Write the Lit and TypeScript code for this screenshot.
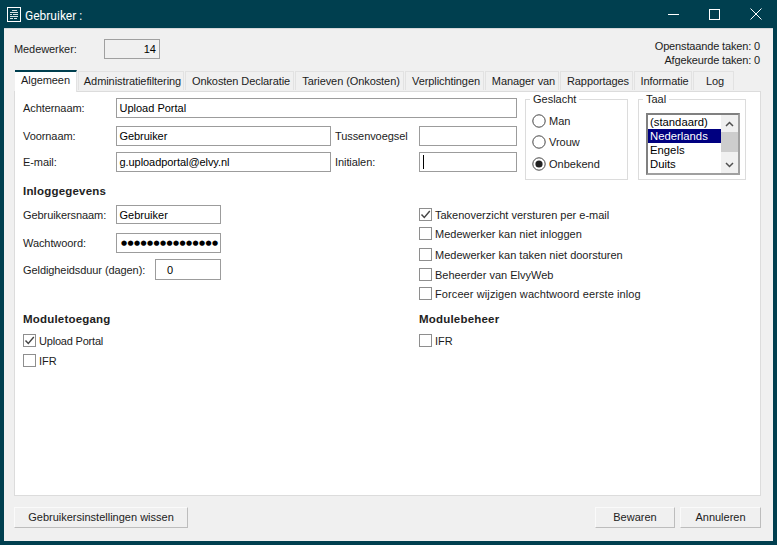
import { LitElement, html, css, nothing } from "lit";
import { customElement } from "lit/decorators.js";

const tabs: [string, number][] = [
  ["Algemeen", 62], ["Administratiefiltering", 106], ["Onkosten Declaratie", 109], ["Tarieven (Onkosten)", 109],
  ["Verplichtingen", 79], ["Manager van", 74], ["Rapportages", 73], ["Informatie", 58], ["Log", 41],
];
const check = html`<svg viewBox="0 0 13 13" width="13" height="13"><path d="M2.5 6.5 L5.3 9.5 L10.8 3" fill="none" stroke="#444" stroke-width="1.4"/></svg>`;

@customElement("app-root")
export class AppRoot extends LitElement {
  static styles = css`
    :host { display: block; width: 777px; height: 545px; background: #003f4f; font: 11px "Liberation Sans", Arial, sans-serif; color: #1c1c1c; overflow: hidden; }
    * { box-sizing: border-box; }
    .caption { height: 28px; display: flex; align-items: center; color: #fff; padding-left: 7px; }
    .caption .title { font: 12px Roboto, sans-serif; margin: 3px 0 0 4px; flex: 1; }
    .caption svg { display: block; }
    .wbtn { width: 41px; height: 28px; display: flex; align-items: center; justify-content: center; }
    .wbtn.close { width: 42px; }
    .wbtns { display: flex; }
    .client { margin-left: 4px; width: 769px; height: 513px; background: #f0f0f0; border-top: 1px solid #d4d8da; padding: 0 12px 0 10px; display: flex; flex-direction: column; }
    .head { height: 41px; display: flex; justify-content: space-between; padding-top: 10px; }
    .med { display: flex; align-items: center; height: 20px; }
    .med .lab { width: 90px; }
    .med .val { width: 56px; height: 20px; border: 1px solid #a0a0a0; text-align: right; padding-right: 3px; line-height: 18px; color: #000; }
    .counts { text-align: right; line-height: 14px; margin-right: 1px; letter-spacing: -0.15px; }
    .tabs { display: flex; gap: 1px; height: 22px; padding-left: 1px; align-items: flex-end; position: relative; z-index: 1; margin-top: -1px; }
    .tab { height: 19px; background: #f0f0f0; border: 1px solid #e2e2e2; border-bottom: none; text-align: center; line-height: 19px; padding-left: 3px; margin-bottom: 1px; white-space: nowrap; letter-spacing: -0.08px; }
    .tab.on { height: 22px; margin-bottom: -1px; background: #fff; border: none; border-top: 2px solid #003f4f; border-right: 1px solid #e2e2e2; line-height: 17px; padding-left: 0; }
    .panel { width: 747px; height: 405px; background: #fff; border: 1px solid #dcdcdc; padding: 6px 0 0 8px; }
    .top { display: flex; }
    .main { width: 494px; display: flex; flex-direction: column; }
    .row { display: flex; align-items: center; }
    .r1 { height: 20px; }
    .r2 { height: 20px; margin-top: 8px; }
    .r3 { height: 20px; margin-top: 6px; }
    .rn { height: 19px; margin-top: 7px; }
    .rw { height: 20px; margin-top: 9px; }
    .rg { height: 21px; margin-top: 6px; }
    .lab { white-space: nowrap; letter-spacing: -0.08px; }
    .l93 { width: 93px; }
    .l88 { width: 88px; padding-left: 4px; }
    .l132 { width: 132px; }
    .inp { height: 100%; border: 1px solid #9c9c9c; background: #fff; padding-left: 2.5px; color: #000; display: flex; align-items: center; white-space: nowrap; overflow: hidden; }
    .w401 { width: 401px; } .w215 { width: 215px; letter-spacing: -0.06px; } .w98 { width: 98px; } .w105 { width: 105px; } .w66 { width: 66px; padding-left: 11px; }
    .caret { width: 1px; height: 14px; background: #000; }
    .inp.dots { font: 7px "DejaVu Sans", sans-serif; letter-spacing: 0.4px; padding-left: 4px; }
    fieldset { margin: 0; padding: 0; border: 1px solid #dcdcdc; min-inline-size: 0; }
    legend { padding: 0 3px; margin-left: -3px; line-height: 12px; }
    .gender { width: 103px; height: 87px; margin: -5px 0 0 8px; padding: 5px 0 0 6px; }
    .gender legend { margin-left: -2px; }
    .lang { width: 108px; height: 87px; margin: -5px 0 0 10px; padding: 8px 0 0 7px; }
    .radio { display: flex; align-items: center; gap: 3px; height: 21.5px; }
    .radio svg { display: block; }
    .list { width: 94px; height: 62px; border: 2px solid; border-color: #808080 #a0a0a0 #a0a0a0 #808080; display: flex; color: #000; }
    .items { width: 74px; }
    .item { height: 14px; line-height: 14px; padding-left: 2px; font-size: 11.3px; }
    .item.sel { background: #000080; color: #fff; }
    .sb { width: 17px; background: #f0f0f0; display: flex; flex-direction: column; }
    .sb .a { height: 17px; display: flex; align-items: center; justify-content: center; }
    .sb .g { flex: 1; }
    .sb .t { height: 20px; background: #cdcdcd; }
    .bold { font-weight: bold; font-size: 11.5px; letter-spacing: 0.2px; color: #222; line-height: 14px; height: 14px; }
    .login { display: flex; margin-top: 4px; }
    .col { width: 396px; flex: none; }
    .cb { display: flex; align-items: center; gap: 3px; height: 13px; white-space: nowrap; }
    .box { width: 13px; height: 13px; border: 1px solid #8e8e8e; background: #fff; position: relative; flex: none; }
    .box svg { position: absolute; left: -1px; top: -1px; }
    .rcol { display: flex; flex-direction: column; margin-top: 24px; }
    .m6 { margin-bottom: 6px; } .m7 { margin-bottom: 7px; } .m8 { margin-bottom: 8px; }
    .mt8 { margin-top: 8px; } .mt7 { margin-top: 7px; }
    .wide { letter-spacing: 0.1px; }
    .up { letter-spacing: -0.2px; }
    .modules { display: flex; margin-top: 12px; }
    .bottom { display: flex; width: 747px; margin-top: 11px; }
    .btn { height: 21px; background: #f0f0f0; border: 1px solid; border-color: #fafafa #bdbdbd #bdbdbd #fafafa; text-align: center; line-height: 19px; color: #222; }
    .btn.reset { width: 174px; }
    .btn.save { width: 80px; margin-left: auto; }
    .btn.cancel { width: 81px; margin-left: 5px; }
  `;

  private cb(label: string, on = false, cls = "") {
    return html`<div class="cb ${cls}"><span class="box">${on ? check : nothing}</span><span>${label}</span></div>`;
  }
  private radio(label: string, on = false) {
    return html`<div class="radio"><svg width="14" height="14" viewBox="0 0 14 14"><circle cx="7" cy="7" r="6.2" fill="#fff" stroke="#444" stroke-width="1"/>${on ? this.dot() : nothing}</svg><span>${label}</span></div>`;
  }
  private dot() {
    return html`<svg x="3" y="3" width="8" height="8" viewBox="0 0 8 8"><circle cx="4" cy="4" r="3.6" fill="#222"/></svg>`;
  }

  render() {
    return html`
      <div class="caption">
        <svg width="14" height="15" viewBox="0 0 14 15"><rect x="0.5" y="0.5" width="13" height="14" fill="none" stroke="#fff"/><path d="M5 3.5h5M3 5.5h8M3 7.5h2M6 7.5h5M3 9.5h8M3 11.5h3M7 11.5h3" stroke="#fff" stroke-opacity="0.85"/></svg>
        <span class="title">Gebruiker :</span>
        <div class="wbtns">
          <div class="wbtn"><svg width="11" height="11" viewBox="0 0 11 11"><path d="M0 5.5h11" stroke="#fff"/></svg></div>
          <div class="wbtn"><svg width="11" height="11" viewBox="0 0 11 11"><rect x="0.5" y="0.5" width="10" height="10" fill="none" stroke="#fff"/></svg></div>
          <div class="wbtn close"><svg width="12" height="12" viewBox="0 0 12 12"><path d="M0.5 0.5l11 11M11.5 0.5l-11 11" stroke="#fff"/></svg></div>
        </div>
      </div>
      <div class="client">
        <div class="head">
          <div class="med"><span class="lab">Medewerker:</span><div class="val">14</div></div>
          <div class="counts">Openstaande taken: 0<br />Afgekeurde taken: 0</div>
        </div>
        <div class="tabs">
          ${tabs.map(([t, w], i) => html`<div class="tab ${i === 0 ? "on" : ""}" style="width:${w}px">${t}</div>`)}
        </div>
        <div class="panel">
          <div class="top">
            <div class="main">
              <div class="row r1"><span class="lab l93">Achternaam:</span><div class="inp w401">Upload Portal</div></div>
              <div class="row r2"><span class="lab l93">Voornaam:</span><div class="inp w215">Gebruiker</div><span class="lab l88">Tussenvoegsel</span><div class="inp w98"></div></div>
              <div class="row r3"><span class="lab l93">E-mail:</span><div class="inp w215">g.uploadportal@elvy.nl</div><span class="lab l88">Initialen:</span><div class="inp w98"><span class="caret"></span></div></div>
            </div>
            <fieldset class="gender"><legend>Geslacht</legend>
              ${this.radio("Man")}${this.radio("Vrouw")}${this.radio("Onbekend", true)}
            </fieldset>
            <fieldset class="lang"><legend>Taal</legend>
              <div class="list">
                <div class="items">
                  <div class="item">(standaard)</div><div class="item sel">Nederlands</div><div class="item">Engels</div><div class="item">Duits</div>
                </div>
                <div class="sb">
                  <div class="a"><svg width="9" height="6" viewBox="0 0 9 6"><path d="M1 5l3.5-3.5L8 5" fill="none" stroke="#505050" stroke-width="1.5"/></svg></div>
                  <div class="t"></div><div class="g"></div>
                  <div class="a"><svg width="9" height="6" viewBox="0 0 9 6"><path d="M1 1l3.5 3.5L8 1" fill="none" stroke="#505050" stroke-width="1.5"/></svg></div>
                </div>
              </div>
            </fieldset>
          </div>
          <div class="login">
            <div class="col">
              <div class="bold">Inloggegevens</div>
              <div class="row rn"><span class="lab l93">Gebruikersnaam:</span><div class="inp w105">Gebruiker</div></div>
              <div class="row rw"><span class="lab l93">Wachtwoord:</span><div class="inp w105 dots">●●●●●●●●●●●●●●●</div></div>
              <div class="row rg"><span class="lab l132">Geldigheidsduur (dagen):</span><div class="inp w66">0</div></div>
            </div>
            <div class="rcol">
              ${this.cb("Takenoverzicht versturen per e-mail", true, "m6")}
              ${this.cb("Medewerker kan niet inloggen", false, "m8")}
              ${this.cb("Medewerker kan taken niet doorsturen", false, "m7")}
              ${this.cb("Beheerder van ElvyWeb", false, "m6")}
              ${this.cb("Forceer wijzigen wachtwoord eerste inlog", false, "wide")}
            </div>
          </div>
          <div class="modules">
            <div class="col">
              <div class="bold">Moduletoegang</div>
              ${this.cb("Upload Portal", true, "up mt8")}
              ${this.cb("IFR", false, "mt7")}
            </div>
            <div class="col">
              <div class="bold">Modulebeheer</div>
              ${this.cb("IFR", false, "mt8")}
            </div>
          </div>
        </div>
        <div class="bottom">
          <div class="btn reset">Gebruikersinstellingen wissen</div>
          <div class="btn save">Bewaren</div>
          <div class="btn cancel">Annuleren</div>
        </div>
      </div>
    `;
  }
}
